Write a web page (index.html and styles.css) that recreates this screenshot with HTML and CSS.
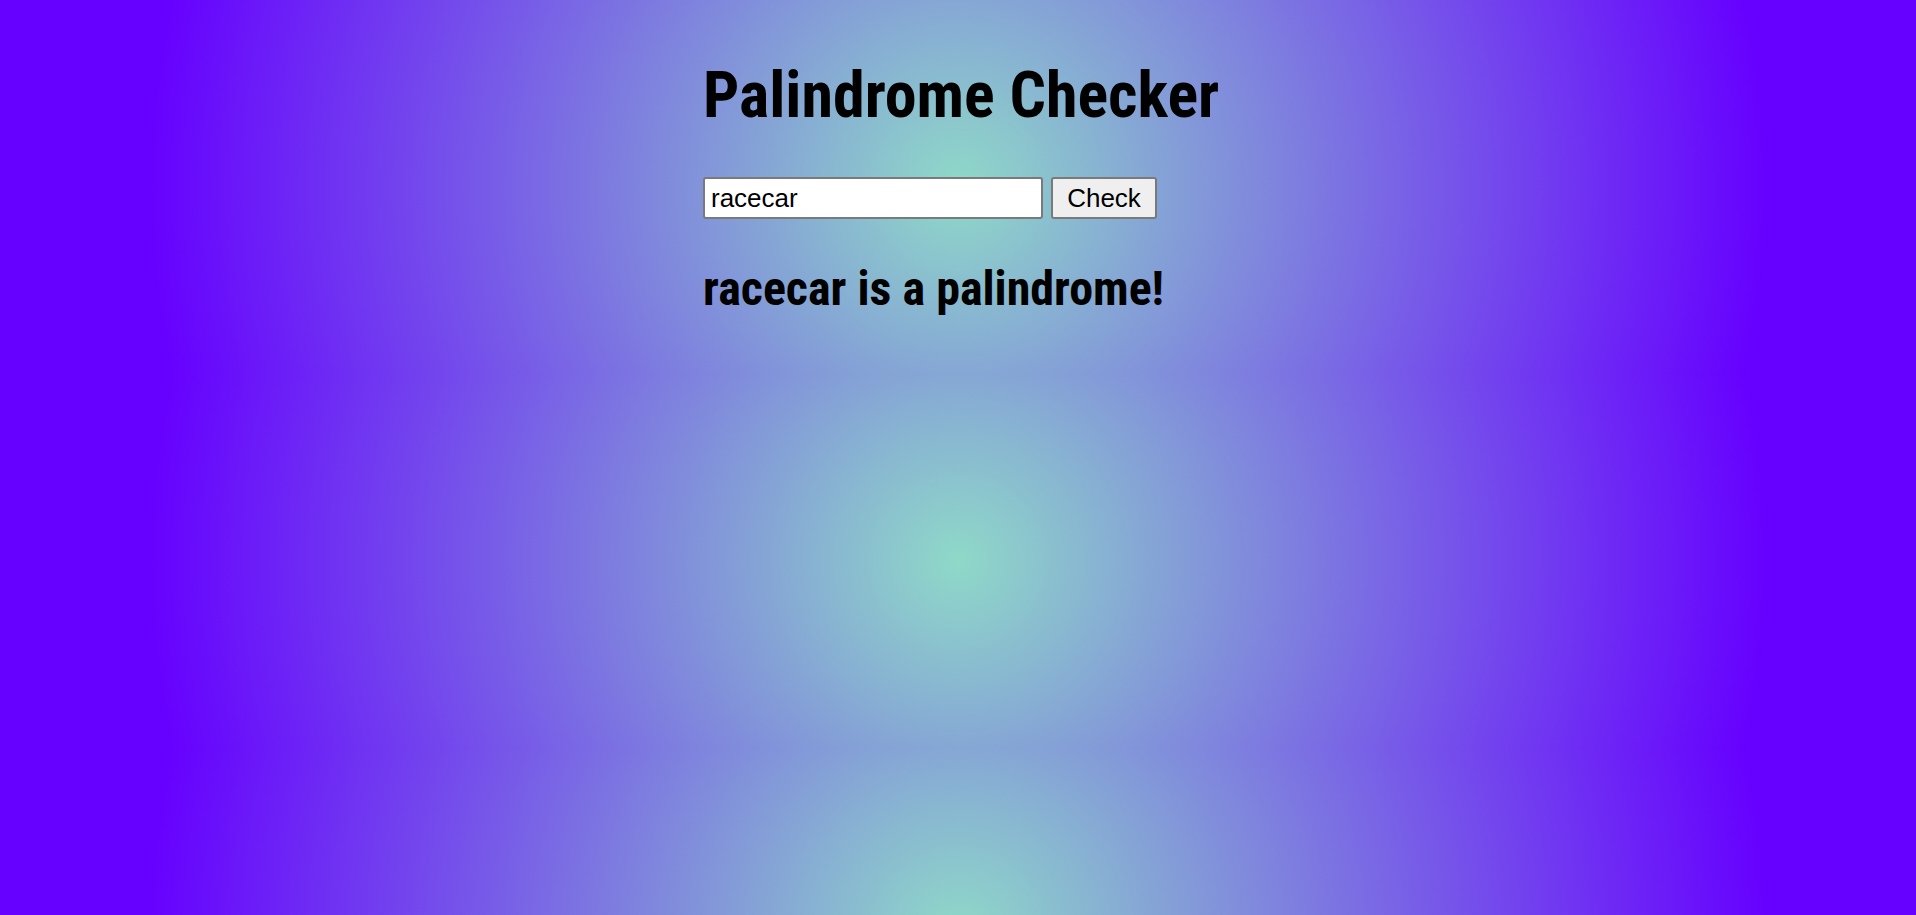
FILE: index.html
```html
<!DOCTYPE html>
<html lang="en">
<head>
<meta charset="utf-8">
<title>Palindrome Checker</title>
<link rel="stylesheet" href="styles.css">
</head>
<body>
<main class="app">
  <h1 class="title">Palindrome Checker</h1>
  <form class="check-form">
    <input class="text-input" type="text" value="racecar">
    <button class="check-btn" type="button">Check</button>
  </form>
  <h2 class="result">racecar is a palindrome!</h2>
</main>
</body>
</html>
```

FILE: styles.css
```css
html {
  margin: 0;
}

body {
  margin: 0;
  padding: 58px 0 0;
  background: radial-gradient(circle, #8fd9c8 0%, #6600ff 83%);
  background-size: 100% 374px;
}

.app {
  width: 510px;
  margin: 0 auto;
  font-family: "Roboto Condensed", Roboto, "Liberation Sans", sans-serif;
  color: #000;
}

.title {
  margin: 0 0 44px;
  font-size: 64px;
  font-weight: 700;
  white-space: nowrap;
}

.check-form {
  display: flex;
  gap: 8px;
  margin: 0 0 41px;
}

.text-input,
.check-btn {
  box-sizing: border-box;
  height: 42px;
  border: 2px solid #7a7a7a;
  border-radius: 3px;
  font-family: "Liberation Sans", Arial, sans-serif;
  font-size: 26px;
  color: #000;
}

.text-input {
  width: 340px;
  padding: 4px 6px;
  background: #fff;
}

.check-btn {
  width: 106px;
  padding: 4px 6px;
  background: #efefef;
}

.result {
  margin: 0;
  font-size: 48px;
  font-weight: 700;
  white-space: nowrap;
}
```
